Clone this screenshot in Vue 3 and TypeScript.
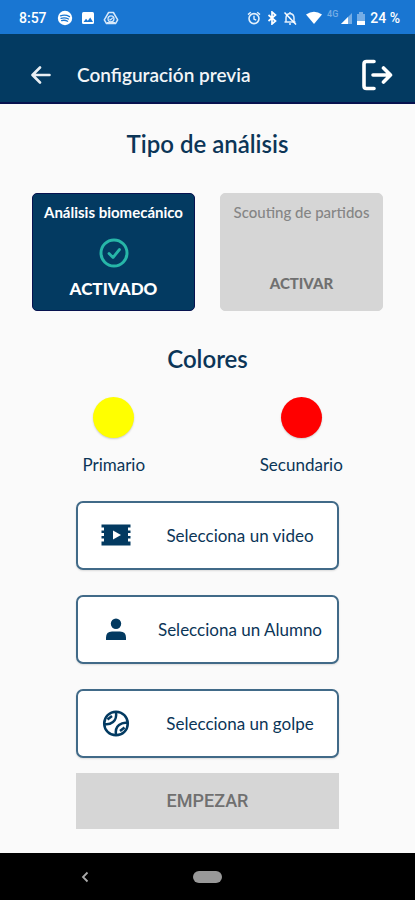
<script setup lang="ts">
import { ref } from 'vue'

interface ColorChoice {
  id: string
  label: string
  value: string
}

interface Selector {
  icon: 'video' | 'person' | 'ball'
  label: string
}

const colors = ref<ColorChoice[]>([
  { id: 'primary', label: 'Primario', value: '#ffff00' },
  { id: 'secondary', label: 'Secundario', value: '#ff0000' },
])

const selectors: Selector[] = [
  { icon: 'video', label: 'Selecciona un video' },
  { icon: 'person', label: 'Selecciona un Alumno' },
  { icon: 'ball', label: 'Selecciona un golpe' },
]
</script>

<template>
  <div class="screen">
    <div class="status">
      <span class="clock">8:57</span>
      <svg class="s-icon" viewBox="0 0 16 16">
        <circle cx="8" cy="8" r="7.200" fill="#fff" />
        <path d="M3.500 5.800q4.800-1.500 9 .8M4 8.300q4-1.200 7.500.7M4.600 10.600q3.200-.9 6 .6" fill="none" stroke="#1976d2" stroke-width="1.300" stroke-linecap="round" />
      </svg>
      <svg class="s-icon" viewBox="0 0 16 16">
        <rect x="2" y="2" width="12" height="12" rx="1.500" fill="#fff" />
        <path d="M3.500 12 6 8.800l1.800 2 2.400-3.200L13 12z" fill="#1976d2" />
      </svg>
      <svg class="s-icon" viewBox="0 0 16 16">
        <path d="M5.600 2.500h4.800l4.300 7.300-2.200 3.700H3.500L1.300 9.800z" fill="none" stroke="#d6e8fa" stroke-width="1.500" stroke-linejoin="round" />
        <circle cx="8" cy="8.800" r="3" fill="none" stroke="#d6e8fa" stroke-width="1.300" />
        <path d="m6.500 8.800 1.200 1.200L9.800 7.700M4 12.500h8" fill="none" stroke="#d6e8fa" stroke-width="1.200" />
      </svg>
      <div class="status-right">
        <svg class="alarm" viewBox="0 0 14 14">
          <circle cx="7" cy="7.600" r="5" fill="none" stroke="#e3f0fc" stroke-width="1.600" />
          <path d="M1 3.600 3.800 1.200M13 3.600l-2.800-2.400M7 4.800V8l2.200 1.200" fill="none" stroke="#e3f0fc" stroke-width="1.400" />
        </svg>
        <svg class="bluetooth" viewBox="0 0 10 14">
          <path d="m1.500 4 7 6L5 13V1l3.500 3-7 6" fill="none" stroke="#fff" stroke-width="1.700" />
        </svg>
        <svg class="bell" viewBox="0 0 14 14">
          <path d="M3 11V7q0-4 4-4.500Q11 3 11 7v4zM7 1v2M1.500 11h11M6 13h2" fill="none" stroke="#e3f0fc" stroke-width="1.500" />
          <path d="m1.500 1.500 11.500 12" stroke="#fff" stroke-width="1.500" />
        </svg>
        <svg class="wifi" viewBox="0 0 18 14">
          <path d="M1 3.500Q9-2 17 3.500L9 13z" fill="#fff" />
        </svg>
        <span class="network">4G</span>
        <svg class="signal" viewBox="0 0 13 13">
          <path d="M1 12 12 1v11z" fill="#75ade5" />
          <path d="m1 12 7-7v7z" fill="#fff" />
        </svg>
        <svg class="battery" viewBox="0 0 8 13">
          <path d="M0 2h2V0h4v2h2v7H0z" fill="#75ade5" />
          <path d="M0 9h8v4H0z" fill="#fff" />
        </svg>
        <span class="percent">24 %</span>
      </div>
    </div>

    <header class="bar">
      <button class="icon-button" type="button" aria-label="Volver">
        <svg class="back" viewBox="0 0 20 18">
          <path d="M18.500 9H2M9 1.500 1.500 9 9 16.500" fill="none" stroke="#e8eef3" stroke-width="2.600" stroke-linecap="round" stroke-linejoin="round" />
        </svg>
      </button>
      <h1>Configuración previa</h1>
      <button class="icon-button" type="button" aria-label="Salir">
        <svg class="exit" viewBox="0 0 32 32">
          <path d="M13 2.500H5.500Q3 2.500 3 5v22q0 2.500 2.500 2.500H13" fill="none" stroke="#fff" stroke-width="3.600" stroke-linecap="round" />
          <path d="M12 16h17M22.500 9l7 7-7 7" fill="none" stroke="#fff" stroke-width="3.600" stroke-linecap="round" stroke-linejoin="round" />
        </svg>
      </button>
    </header>

    <main>
      <h2>Tipo de análisis</h2>
      <div class="cards">
        <button class="card active" type="button" aria-pressed="true">
          <span class="card-name">Análisis biomecánico</span>
          <svg class="check" viewBox="0 0 30 30">
            <circle cx="15" cy="15" r="13" fill="none" stroke="#27b6a8" stroke-width="3" />
            <path d="m10 15.500 4 4 6.500-8" fill="none" stroke="#27b6a8" stroke-width="2.800" stroke-linecap="round" stroke-linejoin="round" />
          </svg>
          <span class="card-state">ACTIVADO</span>
        </button>
        <button class="card" type="button" aria-pressed="false">
          <span class="card-name">Scouting de partidos</span>
          <span class="card-state">ACTIVAR</span>
        </button>
      </div>

      <h2>Colores</h2>
      <div class="colors">
        <button v-for="color in colors" :key="color.id" class="color" type="button">
          <span class="swatch" :style="{ backgroundColor: color.value }"></span>
          <span>{{ color.label }}</span>
        </button>
      </div>

      <div class="actions">
        <button v-for="item in selectors" :key="item.icon" class="selector" type="button">
          <svg v-if="item.icon === 'video'" class="glyph" viewBox="0 0 32 32">
            <path d="M1.500 4.500h29v3h-2.500v3h2.500v2.500h-2.500v3h2.500v2.500h-2.500v3h2.500v4h-29v-4H4v-3H1.500V16H4v-3H1.500v-2.500H4v-3H1.500z" fill="#033a61" />
            <path d="m13 10.500 8 4.500-8 4.500z" fill="#fff" />
          </svg>
          <svg v-else-if="item.icon === 'person'" class="glyph" viewBox="0 0 32 32">
            <circle cx="16" cy="9.800" r="5.200" fill="#033a61" />
            <path d="M6 26v-2.500Q6 17.500 12 17.500h8q6 0 6 6V26z" fill="#033a61" />
          </svg>
          <svg v-else class="glyph" viewBox="0 0 32 32" fill="none" stroke="#033a61" stroke-width="2.500">
            <circle cx="16" cy="15.500" r="11.800" />
            <path d="M16 4q1 7-3 10t-8.500 2M16 27q-1-7 3-10t8.500-2M7.500 11.500 12 8M20 23l4.500-3.500" />
          </svg>
          <span class="selector-label">{{ item.label }}</span>
        </button>
        <button class="start" type="button">EMPEZAR</button>
      </div>
    </main>

    <nav class="system">
      <button class="icon-button" type="button" aria-label="Atrás">
        <svg class="nav-back" viewBox="0 0 8 12">
          <path d="M6.500 1.500 2 6l4.500 4.500" fill="none" stroke="#aaa" stroke-width="1.800" />
        </svg>
      </button>
      <button class="home" type="button" aria-label="Inicio"></button>
      <span></span>
    </nav>
  </div>
</template>

<style>
body {
  background: #fafafa;
}
</style>

<style scoped>
.screen {
  display: flex;
  flex-direction: column;
  min-height: 100vh;
  background: #fafafa;
  color: #0b3557;
  font-family: Lato, "Open Sans", sans-serif;
}

button {
  margin: 0;
  padding: 0;
  border: 0;
  background: none;
  color: inherit;
  font: inherit;
  cursor: pointer;
}

svg {
  display: block;
  flex: none;
}

.status {
  display: flex;
  align-items: center;
  gap: 7px;
  box-sizing: border-box;
  height: 34px;
  padding: 2px 15px 0 19px;
  background: #1976d2;
  color: #fff;
  font: 500 14px/20px Roboto, sans-serif;
}

.clock {
  margin-right: 3px;
}

.s-icon {
  width: 16px;
  height: 16px;
}

.status-right {
  display: flex;
  align-items: center;
  gap: 6px;
  margin-left: auto;
}

.alarm,
.bell {
  width: 14px;
  height: 14px;
}

.bluetooth {
  width: 10px;
  height: 14px;
}

.wifi {
  width: 18px;
  height: 14px;
  margin-left: 2px;
}

.network {
  align-self: flex-start;
  margin-left: -2px;
  color: #75ade5;
  font-size: 9px;
  line-height: 12px;
}

.signal {
  width: 13px;
  height: 13px;
  margin-left: -4px;
}

.battery {
  width: 8px;
  height: 13px;
  margin-left: -2px;
}

.percent {
  margin-left: -1px;
}

.bar {
  display: flex;
  align-items: center;
  box-sizing: border-box;
  height: 70px;
  padding: 13px 22px 0 31px;
  border-bottom: 2px solid #07124f;
  background: #033a61;
  color: #f2f5f8;
}

.back {
  width: 20px;
  height: 18px;
}

.exit {
  width: 32px;
  height: 32px;
}

h1 {
  flex: 1;
  margin: 0 0 0 26px;
  font-size: 19px;
  font-weight: 600;
  line-height: 24px;
}

main {
  display: flex;
  flex: 1;
  flex-direction: column;
}

h2 {
  margin: 24px 0 0;
  font-size: 24px;
  font-weight: 600;
  line-height: 32px;
  text-align: center;
}

.cards {
  display: grid;
  grid-template-columns: 1fr 1fr;
  gap: 25px;
  margin: 33px 32px 8px;
}

.card {
  display: flex;
  flex-direction: column;
  align-items: center;
  height: 118px;
  padding: 8px 0 11px;
  border: 1px solid #d6d6d6;
  border-radius: 5px;
  background: #d6d6d6;
  color: #858585;
  font-size: 15px;
  font-weight: 500;
  line-height: 20px;
  white-space: nowrap;
}

.card .card-state {
  margin: auto 0 6px;
  color: #707070;
  font-weight: 900;
}

.card.active {
  border-color: #07124f;
  background: #033a61;
  color: #fff;
  font-weight: 700;
}

.card.active .card-state {
  margin-bottom: 0;
  color: #fff;
  font-size: 17px;
}

.check {
  width: 30px;
  height: 30px;
  margin-top: 16px;
}

.colors {
  display: grid;
  grid-template-columns: 1fr 1fr;
  margin: 22px 20px 0;
  font-size: 17px;
  line-height: 24px;
}

.color {
  display: flex;
  flex-direction: column;
  align-items: center;
  gap: 15px;
}

.swatch {
  width: 41px;
  height: 41px;
  border-radius: 50%;
  box-shadow: 0 1px 2px #00000030;
}

.actions {
  display: flex;
  flex-direction: column;
  gap: 25px;
  margin: 24px 76px;
}

.selector {
  display: flex;
  align-items: center;
  height: 69px;
  padding: 0 13px 0 22px;
  border: 2px solid #416a88;
  border-radius: 7px;
  background: #fff;
  box-shadow: 0 1px 2px #00000020;
  font-size: 17px;
  line-height: 24px;
}

.glyph {
  width: 32px;
  height: 32px;
}

.selector-label {
  flex: 1;
  margin-left: 24px;
  text-align: center;
  white-space: nowrap;
}

.start {
  height: 56px;
  margin-top: -10px;
  background: #d6d6d6;
  color: #707070;
  font: 500 18px/24px Roboto, sans-serif;
}

.system {
  display: grid;
  grid-template-columns: 1fr auto 1fr;
  align-items: center;
  height: 48px;
  background: #000;
}

.system .icon-button {
  justify-self: center;
  margin-right: 24px;
}

.nav-back {
  width: 8px;
  height: 12px;
}

.home {
  width: 29px;
  height: 12px;
  border-radius: 6px;
  background: #999;
}
</style>
